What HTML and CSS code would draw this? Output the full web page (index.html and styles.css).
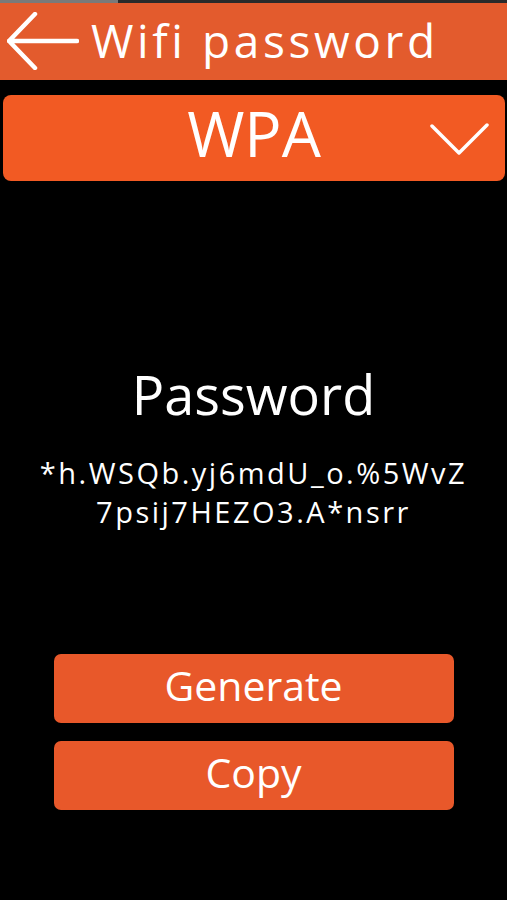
FILE: index.html
```html
<!DOCTYPE html>
<html>
<head>
<meta charset="utf-8">
<link rel="stylesheet" href="styles.css">
</head>
<body>
<div class="app">
  <div class="strip"></div>
  <header class="header">
    <svg class="back" width="72" height="58" viewBox="0 0 72 58">
      <path d="M28 2 L2 29 L28 56 M2 29 L70 29" fill="none" stroke="#fff" stroke-width="4.5" stroke-linecap="round" stroke-linejoin="round"/>
    </svg>
    <h1 class="title">Wifi password</h1>
  </header>
  <div class="select">
    <span class="select-text">WPA</span>
    <svg class="chev" width="62" height="34" viewBox="0 0 62 34">
      <path d="M3 3 L30 30 L58 2" fill="none" stroke="#fff" stroke-width="3.5" stroke-linecap="round" stroke-linejoin="round"/>
    </svg>
  </div>
  <section class="result">
    <h2 class="label">Password</h2>
    <p class="pw">*h.WSQb.yj6mdU_o.%5WvZ<br>7psij7HEZO3.A*nsrr</p>
  </section>
  <div class="actions">
    <button class="btn">Generate</button>
    <button class="btn">Copy</button>
  </div>
</div>
</body>
</html>
```
FILE: styles.css
```css
html, body {
  margin: 0;
  padding: 0;
  background: #000;
}
body {
  font-family: "Open Sans", "Noto Sans", sans-serif;
  color: #fff;
  width: 507px;
  height: 900px;
  overflow: hidden;
}
.app {
  display: flex;
  flex-direction: column;
}
.strip {
  height: 3px;
  background: linear-gradient(to right, #7a7a7a 0, #7a7a7a 118px, #2a2a2a 118px);
}
.header {
  height: 77px;
  background: #e35b2d;
  display: flex;
  align-items: center;
  padding-left: 7px;
  gap: 12px;
}
.back {
  display: block;
  margin-top: -2px;
}
.title {
  margin: 0;
  font-weight: 400;
  font-size: 46px;
  letter-spacing: 3.6px;
  line-height: 1;
  margin-top: -4px;
}
.select {
  margin: 15px 2px 0 3px;
  height: 86px;
  background: #f25a23;
  border-radius: 8px;
  display: flex;
  align-items: center;
  justify-content: center;
  position: relative;
}
.select-text {
  font-size: 62px;
  line-height: 1;
  margin-top: -10px;
}
.chev {
  position: absolute;
  right: 14px;
  top: 28px;
}
.result {
  margin-top: 186px;
  text-align: center;
}
.label {
  margin: 0;
  font-weight: 400;
  font-size: 54px;
  line-height: 1;
}
.pw {
  margin: 32px 0 0;
  font-size: 29px;
  letter-spacing: 2.5px;
  line-height: 39px;
}
.actions {
  margin-top: 123px;
  display: flex;
  flex-direction: column;
  align-items: center;
  gap: 18px;
}
.btn {
  width: 400px;
  height: 69px;
  border: none;
  border-radius: 7px;
  background: #e8582a;
  color: #fff;
  font-family: "Open Sans", "Noto Sans", sans-serif;
  font-size: 41px;
  line-height: 1;
  padding: 0 0 6px;
}
```
